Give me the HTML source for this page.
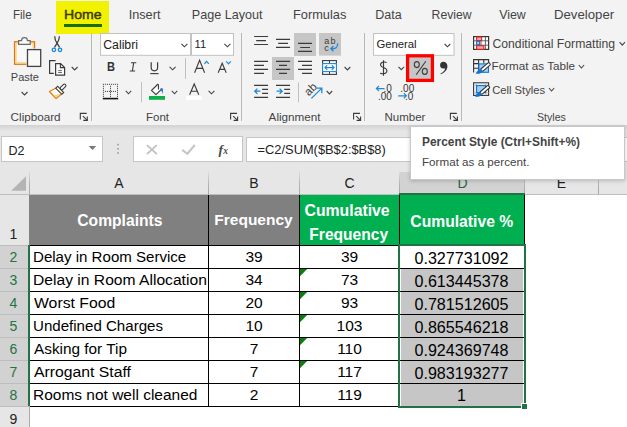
<!DOCTYPE html>
<html><head><meta charset="utf-8">
<style>
*{margin:0;padding:0;box-sizing:border-box}
html,body{width:627px;height:427px;overflow:hidden;background:#fff}
body{position:relative;font-family:"Liberation Sans",sans-serif}
.a{position:absolute}
.t{position:absolute;white-space:nowrap;line-height:1}
svg{position:absolute;overflow:visible}
</style></head><body>

<div class="a" style="left:0px;top:0px;width:627px;height:125px;background:#f3f3f3;"></div>
<div class="t" style="left:12.8px;top:9px;font-size:12.5px;color:#444;font-weight:normal;transform:scaleX(0.92);transform-origin:left">File</div>
<div class="a" style="left:56px;top:1px;width:53px;height:33px;background:#f2f200;"></div>
<div class="t" style="left:63.6px;top:8px;font-size:13px;color:#3a3a00;font-weight:normal;-webkit-text-stroke:0.45px #3a3a00;transform:scaleX(1.08);transform-origin:left">Home</div>
<div class="a" style="left:64px;top:24px;width:38px;height:3px;background:#1a6e10;"></div>
<div class="t" style="left:128.7px;top:9px;font-size:12.7px;color:#444;font-weight:normal;">Insert</div>
<div class="t" style="left:191.8px;top:9px;font-size:12.6px;color:#444;font-weight:normal;">Page Layout</div>
<div class="t" style="left:293.0px;top:9px;font-size:12.8px;color:#444;font-weight:normal;">Formulas</div>
<div class="t" style="left:375.2px;top:9px;font-size:12.5px;color:#444;font-weight:normal;">Data</div>
<div class="t" style="left:431.6px;top:9px;font-size:12.2px;color:#444;font-weight:normal;">Review</div>
<div class="t" style="left:499.2px;top:9px;font-size:12.4px;color:#444;font-weight:normal;">View</div>
<div class="t" style="left:554.0px;top:8px;font-size:13.2px;color:#444;font-weight:normal;">Developer</div>
<div class="a" style="left:91px;top:33px;width:1px;height:88px;background:#b8b8b8;"></div>
<div class="a" style="left:241px;top:33px;width:1px;height:88px;background:#b8b8b8;"></div>
<div class="a" style="left:364px;top:33px;width:1px;height:88px;background:#b8b8b8;"></div>
<div class="a" style="left:461px;top:33px;width:1px;height:88px;background:#b8b8b8;"></div>
<div class="t" style="left:10.6px;top:111px;font-size:11.7px;color:#444;font-weight:normal;">Clipboard</div>
<div class="t" style="left:146.0px;top:112px;font-size:11.5px;color:#444;font-weight:normal;">Font</div>
<div class="t" style="left:268.6px;top:111px;font-size:11.7px;color:#444;font-weight:normal;">Alignment</div>
<div class="t" style="left:384.5px;top:112px;font-size:11.5px;color:#444;font-weight:normal;">Number</div>
<div class="t" style="left:536.8px;top:112px;font-size:11.5px;color:#444;font-weight:normal;transform:scaleX(0.92);transform-origin:left">Styles</div>
<div class="a" style="left:0px;top:125px;width:627px;height:47px;background:#e6e6e6;"></div>
<div class="a" style="left:0px;top:125px;width:627px;height:6px;background:#e6e6e6;background:linear-gradient(#d2d2d2,#e6e6e6)"></div>
<div class="a" style="left:1px;top:136px;width:102px;height:26px;background:#fff;border:1px solid #c6c6c6"></div>
<div class="t" style="left:8.5px;top:145px;font-size:12.5px;color:#222;font-weight:normal;">D2</div>
<div class="a" style="left:133px;top:136px;width:110px;height:26px;background:#fff;border:1px solid #c6c6c6"></div>
<div class="a" style="left:246px;top:137px;width:400px;height:25px;background:#fff;border:1px solid #c6c6c6"></div>
<div class="t" style="left:257.6px;top:144px;font-size:12.85px;color:#222;font-weight:normal;">=C2/SUM($B$2:$B$8)</div>
<div class="a" style="left:0px;top:172px;width:627px;height:23px;background:#e6e6e6;"></div>
<div class="a" style="left:399px;top:172px;width:126px;height:23px;background:#d2d2d2;"></div>
<div class="a" style="left:0px;top:194px;width:627px;height:1px;background:#bdbdbd;"></div>
<div class="a" style="left:29px;top:172px;width:1px;height:22px;background:#bdbdbd;background:linear-gradient(#dcdcdc,#b0b0b0 60%,#a8a8a8)"></div>
<div class="a" style="left:208px;top:172px;width:1px;height:22px;background:#bdbdbd;background:linear-gradient(#dcdcdc,#b0b0b0 60%,#a8a8a8)"></div>
<div class="a" style="left:299px;top:172px;width:1px;height:22px;background:#bdbdbd;background:linear-gradient(#dcdcdc,#b0b0b0 60%,#a8a8a8)"></div>
<div class="a" style="left:399px;top:172px;width:1px;height:22px;background:#bdbdbd;background:linear-gradient(#dcdcdc,#b0b0b0 60%,#a8a8a8)"></div>
<div class="a" style="left:524px;top:172px;width:1px;height:22px;background:#bdbdbd;background:linear-gradient(#dcdcdc,#b0b0b0 60%,#a8a8a8)"></div>
<div class="a" style="left:598px;top:172px;width:1px;height:22px;background:#bdbdbd;background:linear-gradient(#dcdcdc,#b0b0b0 60%,#a8a8a8)"></div>
<div class="a" style="left:399px;top:193px;width:126px;height:2px;background:#217346;"></div>
<div class="t" style="left:-31.0px;width:300px;text-align:center;top:176px;font-size:14px;color:#222;font-weight:normal;">A</div>
<div class="t" style="left:104.0px;width:300px;text-align:center;top:176px;font-size:14px;color:#222;font-weight:normal;">B</div>
<div class="t" style="left:199.5px;width:300px;text-align:center;top:176px;font-size:14px;color:#222;font-weight:normal;">C</div>
<div class="t" style="left:312.5px;width:300px;text-align:center;top:176px;font-size:14px;color:#1d6a3e;font-weight:normal;">D</div>
<div class="t" style="left:411.5px;width:300px;text-align:center;top:176px;font-size:14px;color:#222;font-weight:normal;">E</div>
<svg style="left:0;top:0" width="627" height="200"><rect x="14.6" y="41.8" width="19.9" height="22.4" fill="#f8f8f8" stroke="#e27614" stroke-width="1.4"/><rect x="16.1" y="43.3" width="17" height="19.5" fill="none" stroke="#fbd585" stroke-width="1.3"/><path d="M18.6 44.3V40.6H21.6A2.9 2.9 0 0 1 27.4 40.6H30.2V44.3Z" fill="#fafafa" stroke="#6a6a6a" stroke-width="1.2"/><rect x="26.4" y="48.5" width="15.6" height="19" fill="#f3f3f3"/><rect x="27.5" y="49.6" width="13.2" height="16.8" fill="#f9f9f9" stroke="#444" stroke-width="1.3"/><path d="M21.6 92L24.55 95L27.5 92" fill="none" stroke="#444" stroke-width="1.1"/><path d="M54.7 36.2C54.8 39.4 55.6 41.2 57 43.2L59.6 47.4M59.4 36.2C59.3 39.4 58.5 41.2 57.1 43.2L54.5 47.4" fill="none" stroke="#3b3b3b" stroke-width="1.25"/><circle cx="53.9" cy="49.8" r="1.75" fill="#e8f2fb" stroke="#1e88d8" stroke-width="1.3"/><circle cx="60" cy="49.8" r="1.75" fill="#e8f2fb" stroke="#1e88d8" stroke-width="1.3"/><path d="M55.6 60.6H49.6V73.4H53.8" fill="none" stroke="#3b3b3b" stroke-width="1.2"/><path d="M55.6 63.6H60.6L64.6 67.6V75.2H55.6Z" fill="#fafafa" stroke="#3b3b3b" stroke-width="1.2"/><path d="M60.4 63.6V67.6H64.6" fill="none" stroke="#3b3b3b" stroke-width="1.1"/><path d="M58.2 70.6H61.9M58.2 72.5H61.9" fill="none" stroke="#555" stroke-width="0.9"/><path d="M71.7 67L74.65 70L77.6 67" fill="none" stroke="#444" stroke-width="1.1"/><g transform="translate(59.8 90.2) rotate(-45)"><path d="M-0.6 -4L-8.3 -6.4L-8.5 3.2L-0.6 4Z" fill="#fff" stroke="#e3801c" stroke-width="1.3" stroke-linejoin="round"/><path d="M-7.9 -0.8L-8.0 2.6L-2.2 3.2Z" fill="#fcd27a"/><rect x="-1.4" y="-4.3" width="2.6" height="8.6" fill="#fff" stroke="#3b3b3b" stroke-width="1.1"/><rect x="1.2" y="-1.5" width="6.8" height="3" rx="1.5" fill="#fff" stroke="#3b3b3b" stroke-width="1.1"/></g><path d="M80.3 119.60000000000001V113.4H86.7" fill="none" stroke="#3b3b3b" stroke-width="1.1"/><path d="M82.89999999999999 116.2L87.3 120.4" fill="none" stroke="#3b3b3b" stroke-width="1.1"/><path d="M83.3 120.4H87.3V116.4" fill="none" stroke="#3b3b3b" stroke-width="1.1"/><rect x="100.5" y="33.5" width="90" height="21.8" fill="#fff" stroke="#c2c2c2" stroke-width="1"/><rect x="191.5" y="33.5" width="42" height="21.8" fill="#fff" stroke="#c2c2c2" stroke-width="1"/><path d="M181.4 43.8L184.4 46.8L187.4 43.8" fill="none" stroke="#444" stroke-width="1.1"/><path d="M224.4 43.8L227.4 46.8L230.4 43.8" fill="none" stroke="#444" stroke-width="1.1"/><path d="M131 62.7H136.3M129.8 71H135.1M133.7 62.7L132.4 71" fill="none" stroke="#3b3b3b" stroke-width="1.1"/><path d="M151.2 62.2V67.6A3.2 3.2 0 0 0 157.6 67.6V62.2" fill="none" stroke="#3b3b3b" stroke-width="1.2"/><path d="M150.2 73.6H158.6" fill="none" stroke="#3b3b3b" stroke-width="1.1"/><path d="M169.6 66.8L172.6 69.8L175.6 66.8" fill="none" stroke="#444" stroke-width="1.1"/><rect x="185" y="58" width="1" height="21" fill="#c0c0c0"/><path d="M194.6 72.8L199.6 60.2L204.6 72.8M196.4 68.4H202.8" fill="none" stroke="#3b3b3b" stroke-width="1.1"/><path d="M204.4 63.9L206.6 61.4L208.8 63.9" fill="none" stroke="#1e88d8" stroke-width="1.2"/><path d="M218.2 72.8L222.2 63.2L226.2 72.8M219.6 69.4H224.8" fill="none" stroke="#3b3b3b" stroke-width="1.1"/><path d="M226.2 61.3L228.5 63.8L230.8 61.3" fill="none" stroke="#1e88d8" stroke-width="1.2"/><g fill="#333"><rect x="102.9" y="83.8" width="1" height="1"/><rect x="104.9" y="83.8" width="1" height="1"/><rect x="106.9" y="83.8" width="1" height="1"/><rect x="108.9" y="83.8" width="1" height="1"/><rect x="110.9" y="83.8" width="1" height="1"/><rect x="112.9" y="83.8" width="1" height="1"/><rect x="114.9" y="83.8" width="1" height="1"/><rect x="116.9" y="83.8" width="1" height="1"/><rect x="102.9" y="85.8" width="1" height="1"/><rect x="117" y="85.8" width="1" height="1"/><rect x="110" y="85.8" width="1" height="1"/><rect x="102.9" y="87.8" width="1" height="1"/><rect x="117" y="87.8" width="1" height="1"/><rect x="110" y="87.8" width="1" height="1"/><rect x="102.9" y="89.8" width="1" height="1"/><rect x="117" y="89.8" width="1" height="1"/><rect x="110" y="89.8" width="1" height="1"/><rect x="102.9" y="91.8" width="1" height="1"/><rect x="117" y="91.8" width="1" height="1"/><rect x="110" y="91.8" width="1" height="1"/><rect x="102.9" y="93.8" width="1" height="1"/><rect x="117" y="93.8" width="1" height="1"/><rect x="110" y="93.8" width="1" height="1"/><rect x="102.9" y="95.8" width="1" height="1"/><rect x="117" y="95.8" width="1" height="1"/><rect x="110" y="95.8" width="1" height="1"/><rect x="104.9" y="90.9" width="1" height="1"/><rect x="106.9" y="90.9" width="1" height="1"/><rect x="108.9" y="90.9" width="1" height="1"/><rect x="110.9" y="90.9" width="1" height="1"/><rect x="112.9" y="90.9" width="1" height="1"/><rect x="114.9" y="90.9" width="1" height="1"/></g><rect x="102.8" y="97.8" width="15.4" height="1.6" fill="#111"/><path d="M125.8 90.8L128.5 93.8L131.2 90.8" fill="none" stroke="#444" stroke-width="1.1"/><rect x="141" y="82" width="1" height="20.4" fill="#c0c0c0"/><path d="M151.5 90.4L156.6 85.5L161.1 89.6L156 94.7Z" fill="#fff"/><path d="M156.6 85.5L151.5 90.4L156 94.7L161.1 89.6M156.6 85.5Q157.5 83.4 158.4 84.9L158.5 89.4" fill="none" stroke="#3b3b3b" stroke-width="1.15" stroke-linejoin="round"/><path d="M160.3 88.8C161.4 87.2 163.4 88.2 163 90.4C162.8 91.6 162.7 93 162.5 94.2C162.1 92.6 161.8 90.8 160.6 89.8Z" fill="#1e7bd0"/><rect x="149" y="96" width="16" height="3.8" fill="#0db14b"/><path d="M171.8 90.8L174.5 93.8L177.2 90.8" fill="none" stroke="#444" stroke-width="1.1"/><path d="M189.6 94.7L194.2 84L198.8 94.7M191.3 91.2H197.1" fill="none" stroke="#3b3b3b" stroke-width="1.1"/><rect x="186" y="96" width="16" height="3.8" fill="#ffffff"/><path d="M208.6 90.8L211.5 93.8L214.4 90.8" fill="none" stroke="#444" stroke-width="1.1"/><path d="M230.6 119.60000000000001V113.4H237.0" fill="none" stroke="#3b3b3b" stroke-width="1.1"/><path d="M233.2 116.2L237.6 120.4" fill="none" stroke="#3b3b3b" stroke-width="1.1"/><path d="M233.6 120.4H237.6V116.4" fill="none" stroke="#3b3b3b" stroke-width="1.1"/><rect x="294" y="33" width="22" height="23" fill="#c6c6c6"/><rect x="319" y="33" width="22" height="22.6" fill="#c6c6c6"/><rect x="272" y="57" width="22" height="23" fill="#c6c6c6"/><path d="M254.1 36.5H268.1M256.2 40.6H266M254.1 44.5H268.1M276 39.4H290.1M278.2 43.4H288M276 47.4H290.1M298 43.4H312M300.2 47.5H310M298 51.4H312M254.1 61.3H268.1M254.1 65.3H264M254.1 69.3H268.1M254.1 73.4H264M276 61.3H290.1M279 65.3H287M276 69.3H290.1M279 73.4H287M298 61.3H312M302 65.3H312M298 69.3H312M302 73.4H312M254.1 85.4H268.1M262.1 89.3H268.1M262.1 93.3H268.1M254.1 97.3H268.1M276 85.4H290.1M284.2 89.3H290.1M284.2 93.3H290.1M276 97.3H290.1" fill="none" stroke="#3b3b3b" stroke-width="1.15"/><path d="M254.8 91.2H260.4M257.4 88.6L254.8 91.2L257.4 93.8" fill="none" stroke="#1e88d8" stroke-width="1.3"/><path d="M276.6 91.2H282.2M279.6 88.6L282.2 91.2L279.6 93.8" fill="none" stroke="#1e88d8" stroke-width="1.3"/><rect x="298" y="82.4" width="1" height="20" fill="#c0c0c0"/><text x="324.3" y="43.6" font-family="Liberation Sans" font-size="9" fill="#3b3b3b" letter-spacing="1.3">ab</text><text x="324.3" y="50.9" font-family="Liberation Sans" font-size="9" fill="#3b3b3b">c</text><path d="M337.6 43.4C338 47.6 335.4 48.8 331 48.8M333.4 46.2L330.8 48.8L333.4 51.2" fill="none" stroke="#1e88d8" stroke-width="1.3"/><rect x="322.6" y="60.6" width="13.8" height="13.8" fill="#fff" stroke="#3b3b3b" stroke-width="1.1"/><path d="M329.5 60.6V63.2M329.5 72V74.4" fill="none" stroke="#3b3b3b" stroke-width="1"/><rect x="322.6" y="63.6" width="13.8" height="8" fill="#fff" stroke="#1e88d8" stroke-width="1.1"/><path d="M325 67.6H334M327.2 65.4L325 67.6L327.2 69.8M331.8 65.4L334 67.6L331.8 69.8" fill="none" stroke="#1e88d8" stroke-width="1.2"/><path d="M344.6 67L347.45000000000005 69.9L350.3 67" fill="none" stroke="#444" stroke-width="1.1"/><text x="0" y="0" font-family="Liberation Sans" fill="#3b3b3b" transform="translate(308.8 96.4) rotate(-45)" font-size="11.5">ab</text><path d="M311.4 98.4L321.6 88.4M316.8 88.2H321.8V93.2" fill="none" stroke="#1e88d8" stroke-width="1.3"/><path d="M326.7 91L329.45 93.9L332.2 91" fill="none" stroke="#444" stroke-width="1.1"/><path d="M353.6 119.60000000000001V113.4H360.0" fill="none" stroke="#3b3b3b" stroke-width="1.1"/><path d="M356.20000000000005 116.2L360.6 120.4" fill="none" stroke="#3b3b3b" stroke-width="1.1"/><path d="M356.6 120.4H360.6V116.4" fill="none" stroke="#3b3b3b" stroke-width="1.1"/><rect x="373.5" y="33.5" width="80.5" height="21.8" fill="#fff" stroke="#c2c2c2" stroke-width="1"/><path d="M444.6 44L447.45000000000005 46.8L450.3 44" fill="none" stroke="#444" stroke-width="1.1"/><path d="M398.5 66.8L401.3 69.6L404.1 66.8" fill="none" stroke="#444" stroke-width="1.1"/><rect x="407.6" y="55.8" width="24.8" height="24.6" fill="#c6c6c6" stroke="#ff0000" stroke-width="3.3"/><path d="M383.5 60.2V75.8M386.6 62.6C385.6 61.8 382 61.4 380.8 63.6C379.6 66 382.4 67.2 384 67.8C386.2 68.6 387.6 70.2 386.6 72.2C385.6 74 382 74 380.2 73.2" fill="none" stroke="#3b3b3b" stroke-width="1.15"/><ellipse cx="416.8" cy="64.6" rx="2.5" ry="3" fill="none" stroke="#3b3b3b" stroke-width="1.1"/><ellipse cx="424.8" cy="71.4" rx="2.5" ry="3" fill="none" stroke="#3b3b3b" stroke-width="1.1"/><path d="M425.8 61.2L416.2 74.8" fill="none" stroke="#3b3b3b" stroke-width="1.1"/><path d="M443.4 61.8A3.4 3.4 0 1 0 443.6 68.6C444.6 68.6 445 68.2 445.2 68.8C444.6 71 442.8 72.6 440.4 73.6L440.9 74.2C445 72.6 447.6 69.6 447.4 66C447.3 63.4 445.8 61.8 443.4 61.8Z" fill="#333"/><path d="M376.4 88.6H384.6M379 86L376.4 88.6L379 91.2" fill="none" stroke="#1e88d8" stroke-width="1.2"/><path d="M398.2 95.8H406.4M403.8 93.2L406.4 95.8L403.8 98.4" fill="none" stroke="#1e88d8" stroke-width="1.2"/><path d="M450.4 119.60000000000001V113.4H456.79999999999995" fill="none" stroke="#3b3b3b" stroke-width="1.1"/><path d="M453.0 116.2L457.4 120.4" fill="none" stroke="#3b3b3b" stroke-width="1.1"/><path d="M453.4 120.4H457.4V116.4" fill="none" stroke="#3b3b3b" stroke-width="1.1"/><rect x="473.6" y="36.6" width="15" height="12.8" fill="#fff" stroke="#333" stroke-width="1.2"/><path d="M473.6 40.8H488.6M473.6 45.2H488.6M485.4 36.6V49.4M481 40.8V45.2" fill="none" stroke="#555" stroke-width="0.9"/><rect x="476.6" y="37" width="5" height="3.6" fill="#f7a4ab" stroke="#e3201b" stroke-width="1.1"/><rect x="476.6" y="41.3" width="3" height="3.4" fill="#9fd0f5" stroke="#1473d0" stroke-width="1.1"/><rect x="476.6" y="45.7" width="7.2" height="3.6" fill="#f7a4ab" stroke="#e3201b" stroke-width="1.1"/><path d="M473.6 72.6V59.6H488.6V64M473.6 63.6H478.6M473.6 68.3H478.6M478.6 59.6V72.6M483.8 59.6V63.6" fill="none" stroke="#333" stroke-width="1.1"/><rect x="478.9" y="63.9" width="9.6" height="8.4" fill="#9fd0f5" stroke="#1473d0" stroke-width="1.1"/><g transform="translate(481.4 70.4) rotate(-40)"><rect x="0" y="-1.5" width="10.8" height="3" rx="0.8" fill="#fff" stroke="#333" stroke-width="1.05"/><path d="M0.4 -1.7C-1.6 -2.6 -4.6 -2 -6.4 -1.2C-4.8 0.8 -2.4 2.4 0.4 1.7Z" fill="#1473d0"/></g><rect x="473.6" y="82.8" width="15" height="12.6" fill="#fff" stroke="#333" stroke-width="1.1"/><path d="M476.2 82.8V95.4M485.8 82.8V95.4M473.6 85.2H488.6M473.6 92.8H488.6" fill="none" stroke="#aaa" stroke-width="0.8"/><rect x="476.6" y="85.6" width="9" height="7" fill="#9fd0f5" stroke="#1473d0" stroke-width="1.1"/><g transform="translate(480.6 93.4) rotate(-40)"><rect x="0" y="-1.5" width="11" height="3" rx="0.8" fill="#fff" stroke="#333" stroke-width="1.05"/><path d="M0.4 -1.7C-1.6 -2.6 -4.6 -2 -6.4 -1.2C-4.8 0.8 -2.4 2.4 0.4 1.7Z" fill="#1473d0"/></g><path d="M619.6 42.2L622.3 45.2L625 42.2" fill="none" stroke="#444" stroke-width="1.1"/><path d="M578.8 65L581.45 68L584.1 65" fill="none" stroke="#444" stroke-width="1.1"/><path d="M549 88L551.6 91L554.2 88" fill="none" stroke="#444" stroke-width="1.1"/><path d="M88.7 146H96.2L92.45 150.1Z" fill="#777"/><g fill="#9a9a9a"><rect x="117.2" y="143.8" width="1.6" height="1.6"/><rect x="117.2" y="148" width="1.6" height="1.6"/><rect x="117.2" y="152.2" width="1.6" height="1.6"/></g><path d="M147 145.2L156.8 154M156.8 145.2L147 154" fill="none" stroke="#c2c2c2" stroke-width="1.7"/><path d="M182.2 149.8L187.4 153.8L194.8 145" fill="none" stroke="#c6c6c6" stroke-width="2.1"/><text x="218.6" y="153.6" font-family="Liberation Serif" font-style="italic" font-weight="bold" font-size="13.5" fill="#4a4a4a">f</text><text x="223.2" y="153.8" font-family="Liberation Serif" font-style="italic" font-weight="bold" font-size="9.5" fill="#4a4a4a">x</text><path d="M26 176.2V190.8H11.2Z" fill="#b4b4b4"/></svg>
<div class="t" style="left:103.2px;top:39px;font-size:12.3px;color:#222;font-weight:normal;">Calibri</div>
<div class="t" style="left:194.5px;top:39px;font-size:11.2px;color:#222;font-weight:normal;">11</div>
<div class="t" style="left:376.4px;top:39px;font-size:11.3px;color:#222;font-weight:normal;">General</div>
<div class="t" style="left:107.0px;top:61px;font-size:12.6px;color:#333;font-weight:bold;transform:scaleX(0.88);transform-origin:left">B</div>
<div class="t" style="left:383.6px;top:84px;font-size:10px;color:#333;font-weight:normal;">.0</div>
<div class="t" style="left:378.0px;top:92px;font-size:10px;color:#333;font-weight:normal;">.00</div>
<div class="t" style="left:400.3px;top:84px;font-size:10px;color:#333;font-weight:normal;">.00</div>
<div class="t" style="left:404.9px;top:92px;font-size:10px;color:#333;font-weight:normal;">.0</div>
<div class="t" style="left:492.5px;top:38px;font-size:12.2px;color:#444;font-weight:normal;">Conditional Formatting</div>
<div class="t" style="left:491.5px;top:60px;font-size:11.7px;color:#444;font-weight:normal;">Format as Table</div>
<div class="t" style="left:492.2px;top:85px;font-size:11.2px;color:#444;font-weight:normal;">Cell Styles</div>
<div class="t" style="left:10.8px;top:72px;font-size:11px;color:#444;font-weight:normal;">Paste</div>
<div class="a" style="left:0px;top:195px;width:30px;height:232px;background:#e6e6e6;"></div>
<div class="a" style="left:0px;top:245px;width:28px;height:161px;background:#d2d2d2;"></div>
<div class="a" style="left:0px;top:245px;width:29px;height:1px;background:#bdbdbd;"></div>
<div class="a" style="left:0px;top:268px;width:29px;height:1px;background:#bdbdbd;"></div>
<div class="a" style="left:0px;top:291px;width:29px;height:1px;background:#bdbdbd;"></div>
<div class="a" style="left:0px;top:314px;width:29px;height:1px;background:#bdbdbd;"></div>
<div class="a" style="left:0px;top:337px;width:29px;height:1px;background:#bdbdbd;"></div>
<div class="a" style="left:0px;top:360px;width:29px;height:1px;background:#bdbdbd;"></div>
<div class="a" style="left:0px;top:383px;width:29px;height:1px;background:#bdbdbd;"></div>
<div class="a" style="left:0px;top:406px;width:29px;height:1px;background:#bdbdbd;"></div>
<div class="a" style="left:0px;top:429px;width:29px;height:1px;background:#bdbdbd;"></div>
<div class="a" style="left:29px;top:195px;width:1px;height:232px;background:#ababab;"></div>
<div class="a" style="left:28px;top:245px;width:2px;height:161px;background:#217346;"></div>
<div class="t" style="left:-136.5px;width:300px;text-align:center;top:227px;font-size:14px;color:#222;font-weight:normal;">1</div>
<div class="t" style="left:-136.5px;width:300px;text-align:center;top:250px;font-size:14px;color:#217346;font-weight:normal;">2</div>
<div class="t" style="left:-136.5px;width:300px;text-align:center;top:273px;font-size:14px;color:#217346;font-weight:normal;">3</div>
<div class="t" style="left:-136.5px;width:300px;text-align:center;top:296px;font-size:14px;color:#217346;font-weight:normal;">4</div>
<div class="t" style="left:-136.5px;width:300px;text-align:center;top:319px;font-size:14px;color:#217346;font-weight:normal;">5</div>
<div class="t" style="left:-136.5px;width:300px;text-align:center;top:342px;font-size:14px;color:#217346;font-weight:normal;">6</div>
<div class="t" style="left:-136.5px;width:300px;text-align:center;top:365px;font-size:14px;color:#217346;font-weight:normal;">7</div>
<div class="t" style="left:-136.5px;width:300px;text-align:center;top:388px;font-size:14px;color:#217346;font-weight:normal;">8</div>
<div class="t" style="left:-136.5px;width:300px;text-align:center;top:412px;font-size:14px;color:#222;font-weight:normal;">9</div>
<div class="a" style="left:30px;top:195px;width:597px;height:232px;background:#fff;"></div>
<div class="a" style="left:29px;top:195px;width:271px;height:50px;background:#808080;"></div>
<div class="a" style="left:300px;top:195px;width:225px;height:50px;background:#00b050;"></div>
<div class="a" style="left:401px;top:268px;width:122px;height:138px;background:#c6c6c6;"></div>
<div class="a" style="left:30px;top:245px;width:495px;height:1px;background:#000;"></div>
<div class="a" style="left:30px;top:268px;width:495px;height:1px;background:#000;"></div>
<div class="a" style="left:30px;top:291px;width:495px;height:1px;background:#000;"></div>
<div class="a" style="left:30px;top:314px;width:495px;height:1px;background:#000;"></div>
<div class="a" style="left:30px;top:337px;width:495px;height:1px;background:#000;"></div>
<div class="a" style="left:30px;top:360px;width:495px;height:1px;background:#000;"></div>
<div class="a" style="left:30px;top:383px;width:495px;height:1px;background:#000;"></div>
<div class="a" style="left:30px;top:406px;width:495px;height:1px;background:#000;"></div>
<div class="a" style="left:208px;top:195px;width:1px;height:212px;background:#000;"></div>
<div class="a" style="left:299px;top:195px;width:1px;height:212px;background:#000;"></div>
<div class="a" style="left:399px;top:195px;width:1px;height:212px;background:#000;"></div>
<div class="a" style="left:524px;top:195px;width:1px;height:212px;background:#000;"></div>
<div class="a" style="left:30px;top:406px;width:495px;height:1px;background:#000;"></div>
<div class="t" style="left:77.3px;top:213px;font-size:15.65px;color:#fff;font-weight:bold;">Complaints</div>
<div class="t" style="left:214.3px;top:212px;font-size:15.5px;color:#fff;font-weight:bold;">Frequency</div>
<div class="t" style="left:304.5px;top:203px;font-size:15.8px;color:#fff;font-weight:bold;">Cumulative</div>
<div class="t" style="left:309.3px;top:227px;font-size:15.6px;color:#fff;font-weight:bold;">Frequency</div>
<div class="t" style="left:410.3px;top:214px;font-size:15.7px;color:#fff;font-weight:bold;">Cumulative %</div>
<div class="t" style="left:32.8px;top:249px;font-size:15.2px;color:#000;font-weight:normal;transform:scaleX(0.9921);transform-origin:left">Delay in Room Service</div>
<div class="t" style="left:104.0px;width:300px;text-align:center;top:249px;font-size:15.5px;color:#000;font-weight:normal;">39</div>
<div class="t" style="left:199.5px;width:300px;text-align:center;top:249px;font-size:15.5px;color:#000;font-weight:normal;">39</div>
<div class="t" style="left:311.5px;width:300px;text-align:center;top:250px;font-size:16.1px;color:#000;font-weight:normal;">0.327731092</div>
<div class="t" style="left:32.8px;top:272px;font-size:15.2px;color:#000;font-weight:normal;transform:scaleX(1.0296);transform-origin:left">Delay in Room Allocation</div>
<div class="t" style="left:104.0px;width:300px;text-align:center;top:272px;font-size:15.5px;color:#000;font-weight:normal;">34</div>
<div class="t" style="left:199.5px;width:300px;text-align:center;top:272px;font-size:15.5px;color:#000;font-weight:normal;">73</div>
<div class="t" style="left:311.5px;width:300px;text-align:center;top:273px;font-size:16.1px;color:#000;font-weight:normal;">0.613445378</div>
<div class="t" style="left:33.8px;top:295px;font-size:15.2px;color:#000;font-weight:normal;transform:scaleX(1.0395);transform-origin:left">Worst Food</div>
<div class="t" style="left:104.0px;width:300px;text-align:center;top:295px;font-size:15.5px;color:#000;font-weight:normal;">20</div>
<div class="t" style="left:199.5px;width:300px;text-align:center;top:295px;font-size:15.5px;color:#000;font-weight:normal;">93</div>
<div class="t" style="left:311.5px;width:300px;text-align:center;top:296px;font-size:16.1px;color:#000;font-weight:normal;">0.781512605</div>
<div class="t" style="left:32.8px;top:318px;font-size:15.2px;color:#000;font-weight:normal;transform:scaleX(0.9934);transform-origin:left">Undefined Charges</div>
<div class="t" style="left:104.0px;width:300px;text-align:center;top:318px;font-size:15.5px;color:#000;font-weight:normal;">10</div>
<div class="t" style="left:199.5px;width:300px;text-align:center;top:318px;font-size:15.5px;color:#000;font-weight:normal;">103</div>
<div class="t" style="left:311.5px;width:300px;text-align:center;top:319px;font-size:16.1px;color:#000;font-weight:normal;">0.865546218</div>
<div class="t" style="left:33.8px;top:341px;font-size:15.2px;color:#000;font-weight:normal;transform:scaleX(1.0099);transform-origin:left">Asking for Tip</div>
<div class="t" style="left:104.0px;width:300px;text-align:center;top:341px;font-size:15.5px;color:#000;font-weight:normal;">7</div>
<div class="t" style="left:199.5px;width:300px;text-align:center;top:341px;font-size:15.5px;color:#000;font-weight:normal;">110</div>
<div class="t" style="left:311.5px;width:300px;text-align:center;top:342px;font-size:16.1px;color:#000;font-weight:normal;">0.924369748</div>
<div class="t" style="left:33.8px;top:364px;font-size:15.2px;color:#000;font-weight:normal;transform:scaleX(1.0382);transform-origin:left">Arrogant Staff</div>
<div class="t" style="left:104.0px;width:300px;text-align:center;top:364px;font-size:15.5px;color:#000;font-weight:normal;">7</div>
<div class="t" style="left:199.5px;width:300px;text-align:center;top:364px;font-size:15.5px;color:#000;font-weight:normal;">117</div>
<div class="t" style="left:311.5px;width:300px;text-align:center;top:365px;font-size:16.1px;color:#000;font-weight:normal;">0.983193277</div>
<div class="t" style="left:32.8px;top:387px;font-size:15.2px;color:#000;font-weight:normal;transform:scaleX(1.0197);transform-origin:left">Rooms not well cleaned</div>
<div class="t" style="left:104.0px;width:300px;text-align:center;top:387px;font-size:15.5px;color:#000;font-weight:normal;">2</div>
<div class="t" style="left:199.5px;width:300px;text-align:center;top:387px;font-size:15.5px;color:#000;font-weight:normal;">119</div>
<div class="t" style="left:311.5px;width:300px;text-align:center;top:387px;font-size:16.1px;color:#000;font-weight:normal;">1</div>
<svg style="left:300px;top:269px" width="8" height="8"><path d="M0 0H7.2L0 7.2Z" fill="#0a800a"/></svg>
<svg style="left:300px;top:292px" width="8" height="8"><path d="M0 0H7.2L0 7.2Z" fill="#0a800a"/></svg>
<svg style="left:300px;top:315px" width="8" height="8"><path d="M0 0H7.2L0 7.2Z" fill="#0a800a"/></svg>
<svg style="left:300px;top:338px" width="8" height="8"><path d="M0 0H7.2L0 7.2Z" fill="#0a800a"/></svg>
<svg style="left:300px;top:361px" width="8" height="8"><path d="M0 0H7.2L0 7.2Z" fill="#0a800a"/></svg>
<div class="a" style="left:398px;top:244px;width:128px;height:2px;background:#217346;"></div>
<div class="a" style="left:398px;top:244px;width:2px;height:164px;background:#217346;"></div>
<div class="a" style="left:524px;top:244px;width:2px;height:159px;background:#217346;"></div>
<div class="a" style="left:398px;top:406px;width:123px;height:2px;background:#217346;"></div>
<div class="a" style="left:521px;top:403px;width:7px;height:7px;background:#fff;"></div>
<div class="a" style="left:522px;top:404px;width:5px;height:5px;background:#217346;"></div>
<div class="a" style="left:410px;top:126px;width:215px;height:54px;background:#fff;border:1px solid #c8c8c8;box-shadow:0 1px 4px rgba(0,0,0,0.2)"></div>
<div class="t" style="left:422.0px;top:137px;font-size:11.9px;color:#444;font-weight:bold;">Percent Style (Ctrl+Shift+%)</div>
<div class="t" style="left:422.0px;top:156px;font-size:11.65px;color:#444;font-weight:normal;">Format as a percent.</div>
</body></html>
